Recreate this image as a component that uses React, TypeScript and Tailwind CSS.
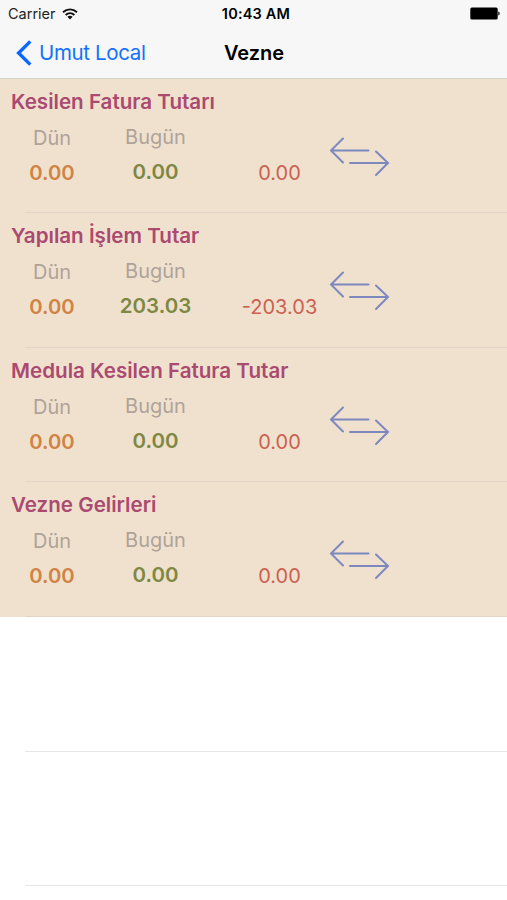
import React from "react";

interface CashRow {
    title: string;
    yesterday: string;
    today: string;
    difference: string;
}

const rows: CashRow[] = [
    { title: "Kesilen Fatura Tutarı", yesterday: "0.00", today: "0.00", difference: "0.00" },
    { title: "Yapılan İşlem Tutar", yesterday: "0.00", today: "203.03", difference: "-203.03" },
    { title: "Medula Kesilen Fatura Tutar", yesterday: "0.00", today: "0.00", difference: "0.00" },
    { title: "Vezne Gelirleri", yesterday: "0.00", today: "0.00", difference: "0.00" },
];

function WifiIcon() {
    return (
        <svg className="ml-[6px]" width="16" height="12" viewBox="0 0 16 12" fill="none" stroke="#111" strokeWidth="1.9">
            <path d="M1 4.2C5 .4 11 .4 15 4.2" />
            <path d="M3.6 7C6.2 4.6 9.8 4.6 12.4 7" />
            <path d="M8 11.4L5.4 8.8C6.9 7.5 9.1 7.5 10.6 8.8Z" fill="#111" stroke="none" />
        </svg>
    );
}

function BatteryIcon() {
    return (
        <svg width="30" height="13" viewBox="0 0 30 13">
            <rect x="0.3" y="0.5" width="27.4" height="12" rx="1.6" fill="#000" />
            <path d="M28.3 4.6C30.1 5 30.1 8 28.3 8.4Z" fill="#000" />
        </svg>
    );
}

function SwapIcon() {
    return (
        <svg width="62" height="40" viewBox="0 0 62 40" fill="none" stroke="#7d88bf" strokeWidth="2" strokeLinecap="round">
            <path d="M14 1.5L2 13.5L14 25.5M2 13.5H39.5" />
            <path d="M47 14.5L59 26L47 38M59 26H21" />
        </svg>
    );
}

function StatusBar() {
    return (
        <div className="flex h-[27px] items-center justify-between pl-2 pr-[7px]">
            <div className="flex w-[124px] items-center text-[14.5px] text-[#222]">
                <span>Carrier</span>
                <WifiIcon />
            </div>
            <span className="text-[14.5px] font-semibold tracking-[0.2px] text-black">10:43 AM</span>
            <div className="flex w-[120px] justify-end">
                <BatteryIcon />
            </div>
        </div>
    );
}

function NavBar() {
    return (
        <div className="flex h-[51px] items-center pl-4 pr-4">
            <button className="flex w-[188px] items-center text-[20.5px] text-[#1272fb]">
                <svg width="17" height="26" viewBox="0 0 17 26" fill="none" stroke="#0a68fb" strokeWidth="3.4">
                    <path d="M14.3 1.4L2.6 13L14.3 24.6" />
                </svg>
                <span className="ml-[6px] pt-px tracking-[-0.35px] whitespace-nowrap">Umut Local</span>
            </button>
            <h1 className="w-[100px] text-center text-[20px] font-semibold text-black">Vezne</h1>
        </div>
    );
}

function CashCell({ row }: { row: CashRow }) {
    return (
        <li className="flex h-[134.4px] flex-col bg-[#f0e1cf]">
            <h2 className="mt-[11px] ml-[11px] text-[20.6px] leading-6 font-semibold text-[#ab4a70]">{row.title}</h2>
            <div className="flex flex-1">
                <div className="w-[104px] pt-[12px] text-center leading-6">
                    <p className="text-[20px] text-[#aea398]">Dün</p>
                    <p className="mt-[11px] text-[20.3px] font-semibold text-[#d08343]">{row.yesterday}</p>
                </div>
                <div className="w-[103px] pt-[11px] text-center leading-6">
                    <p className="text-[20px] text-[#aea398]">Bugün</p>
                    <p className="mt-[11px] text-[20.5px] font-semibold text-[#7d8842]">{row.today}</p>
                </div>
                <p className="ml-[30px] w-[85px] pt-[47px] text-center text-[20px] leading-6 text-[#cc6050]">{row.difference}</p>
                <div className="ml-[6.5px] pt-[23px]">
                    <SwapIcon />
                </div>
            </div>
            <div className="ml-[25px] h-px bg-[#e1d4c7]" />
        </li>
    );
}

function EmptyCell() {
    return (
        <li className="flex h-[134.4px] flex-col justify-end">
            <div className="ml-[25px] h-px bg-[#e6e6e6]" />
        </li>
    );
}

export default function App() {
    return (
        <main className="h-[900px] w-[507px] overflow-hidden bg-white font-[Inter,sans-serif]">
            <header className="h-[79px] border-b border-[#d5d2ca] bg-[#f7f7f7]">
                <StatusBar />
                <NavBar />
            </header>
            <ul>
                {rows.map((row) => (
                    <CashCell key={row.title} row={row} />
                ))}
            </ul>
            <ul className="pt-[0.6px]">
                <EmptyCell />
                <EmptyCell />
            </ul>
        </main>
    );
}
